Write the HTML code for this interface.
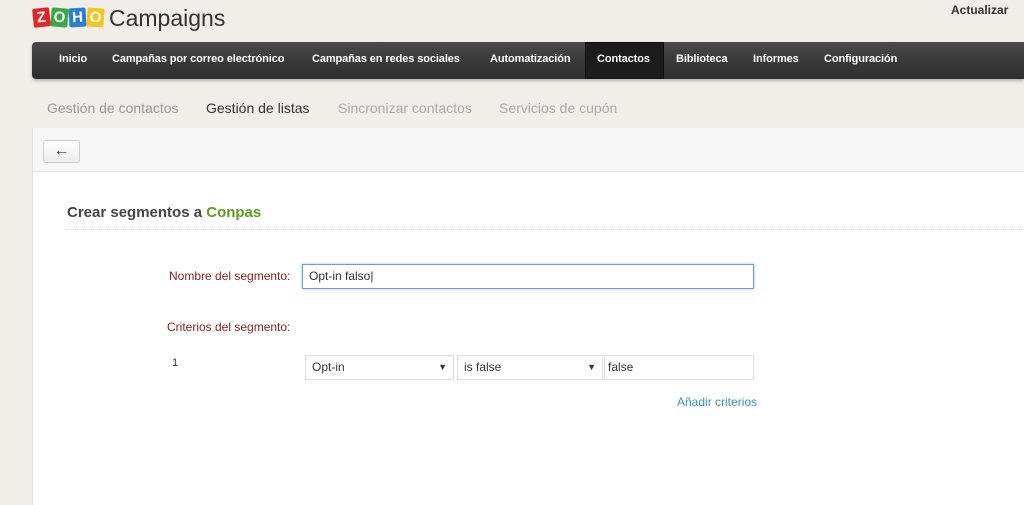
<!DOCTYPE html>
<html><head><meta charset="utf-8"><style>
*{margin:0;padding:0;box-sizing:border-box}
body{width:1024px;height:505px;overflow:hidden;background:#f1eeea;font-family:"Liberation Sans",Arial,sans-serif;position:relative}
.abs{position:absolute}
.logo span{display:inline-block;width:17px;height:19px;color:#fff;font-weight:bold;font-size:15px;text-align:center;line-height:19px;margin-right:1px;border-radius:2px}
.nav{left:32px;top:42px;right:0;height:37px;background:linear-gradient(#4a4a4a,#3a3a3a 50%,#2e2e2e);border-radius:4px 0 0 4px;box-shadow:0 2px 3px rgba(0,0,0,.25)}
.nav div{position:absolute;top:0;height:37px;line-height:34px;color:#fff;font-size:11px;font-weight:bold;letter-spacing:-0.1px}
.sub{top:100px;font-size:14px;color:#999}
.lbl{color:#8b1a1a;font-size:12px}
.box{position:absolute;background:#fff;border:1px solid #ddd;font-size:12px;color:#333;line-height:22px;padding-left:6px;height:25px}
</style></head><body>
<div class="abs logo" style="left:33px;top:8px">
<span style="background:#e42527;transform:rotate(-6deg)">Z</span><span style="background:#3aa845;transform:rotate(5deg)">O</span><span style="background:#2a7fd0;transform:rotate(-3deg)">H</span><span style="background:#f6c51c;transform:rotate(4deg)">O</span>
</div>
<div class="abs" style="left:109px;top:5px;font-size:23px;color:#333">Campaigns</div>
<div class="abs" style="left:951px;top:3px;font-size:12px;font-weight:bold;color:#333">Actualizar</div>
<div class="abs nav">
<div style="left:27px">Inicio</div>
<div style="left:80px">Campañas por correo electrónico</div>
<div style="left:280px">Campañas en redes sociales</div>
<div style="left:458px">Automatización</div>
<div style="left:553px;width:79px;background:#1c1c1c;border:1px solid #111;padding-left:11px;line-height:32px">Contactos</div>
<div style="left:644px">Biblioteca</div>
<div style="left:721px">Informes</div>
<div style="left:792px">Configuración</div>
</div>
<div class="abs sub" style="left:47px">Gestión de contactos</div>
<div class="abs sub" style="left:206px;color:#333">Gestión de listas</div>
<div class="abs sub" style="left:338px;color:#aaa">Sincronizar contactos</div>
<div class="abs sub" style="left:499px;color:#aaa">Servicios de cupón</div>
<div class="abs" style="left:32px;top:128px;right:0;bottom:0;background:#fff;border-left:1px solid #e5e2de"></div>
<div class="abs" style="left:33px;top:128px;right:0;height:44px;background:#f7f7f7;border-bottom:1px solid #e6e6e6"></div>
<div class="abs" style="left:43px;top:140px;width:37px;height:23px;border:1px solid #ccc;border-radius:3px;background:linear-gradient(#fff,#ececec);text-align:center;line-height:19px;font-size:16px;color:#333">&#8592;</div>
<div class="abs" style="left:67px;top:204px;font-size:15px;font-weight:bold;color:#444">Crear segmentos a <span style="color:#5c9e1b">Conpas</span></div>
<div class="abs" style="left:66px;top:229px;right:0;border-top:1px dotted #ddd"></div>
<div class="abs lbl" style="left:169px;top:269px">Nombre del segmento:</div>
<div class="box" style="left:302px;top:264px;width:452px;border:1px solid #6a9ee0;box-shadow:0 0 2px #8ab4ec">Opt-in falso|</div>
<div class="abs lbl" style="left:167px;top:320px">Criterios del segmento:</div>
<div class="abs" style="left:172px;top:357px;font-size:11px;color:#333">1</div>
<div class="box" style="left:305px;top:355px;width:149px">Opt-in<span style="position:absolute;right:6px;font-size:9px">&#9660;</span></div>
<div class="box" style="left:457px;top:355px;width:146px">is false<span style="position:absolute;right:6px;font-size:9px">&#9660;</span></div>
<div class="box" style="left:604px;top:355px;width:150px;padding-left:3px">false</div>
<div class="abs" style="left:677px;top:395px;font-size:12px;color:#3a8fc8">Añadir criterios</div>
</body></html>
